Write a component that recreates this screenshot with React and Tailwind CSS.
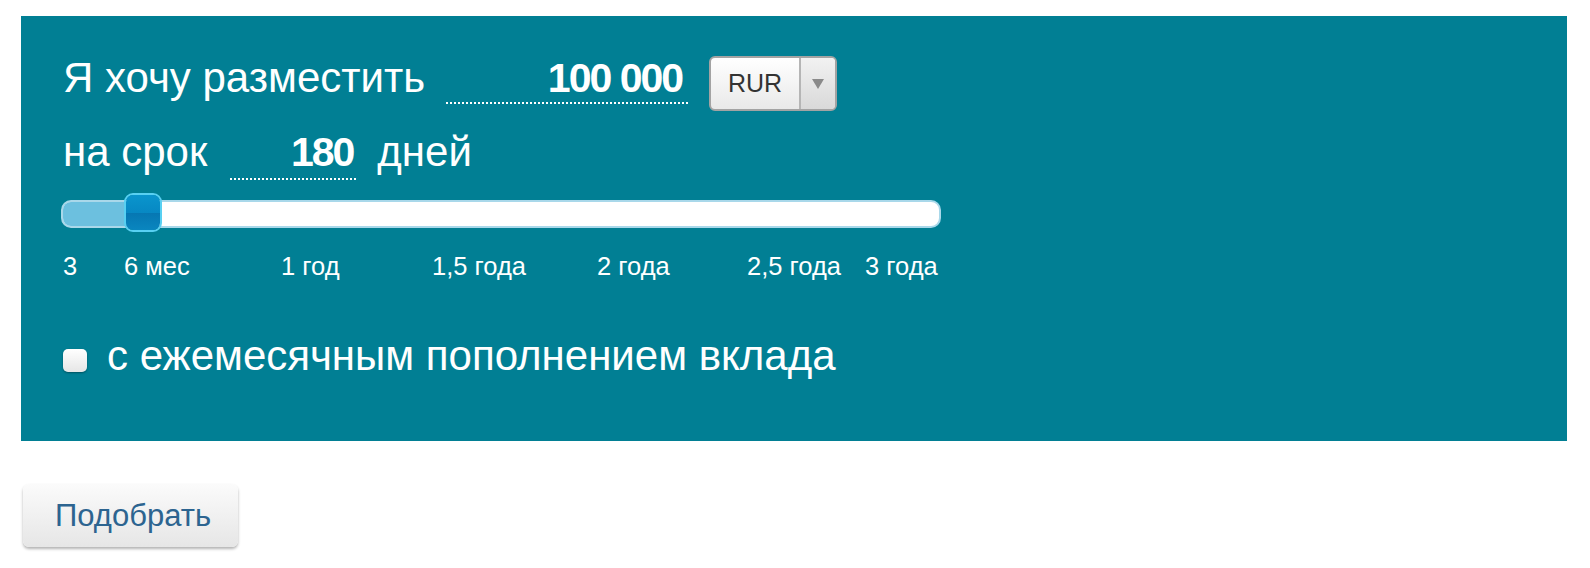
import { useState } from "react"

const ticks = [
  { label: "3", w: "w-[61px]" },
  { label: "6 мес", w: "w-[157px]" },
  { label: "1 год", w: "w-[151px]" },
  { label: "1,5 года", w: "w-[165px]" },
  { label: "2 года", w: "w-[150px]" },
  { label: "2,5 года", w: "w-[118px]" },
  { label: "3 года", w: "" },
]

export default function App() {
  const [refill, setRefill] = useState(false)

  return (
    <div className="min-h-[568px] w-[1590px] bg-white pt-[16px] font-['Liberation_Sans',Arial,sans-serif] text-white">
      {/* Deposit form panel */}
      <div className="ml-[21px] h-[425px] w-[1546px] bg-[#017f94] pl-[42px] pt-[40px]">
        <div className="flex h-[55px] items-start">
          <span className="mt-[1px] text-[42px] leading-[42px]">Я хочу разместить</span>
          <div className="ml-[21px] mt-[1px] w-[242px] border-b-2 border-dotted border-white pb-[3px] pr-[6px] text-right text-[41px] font-bold leading-[42px] tracking-[-2px]">
            100 000
          </div>
          <div className="ml-[21px] flex h-[55px] w-[128px] overflow-hidden rounded-[6px] border-2 border-[#a3a3a3] bg-gradient-to-b from-white to-[#e9e9e9] text-[#333]">
            <div className="flex flex-1 items-center justify-center text-[25px] leading-none">RUR</div>
            <div className="flex w-[36px] items-center justify-center border-l-2 border-[#b5b5b5] bg-gradient-to-b from-[#f2f2f2] to-[#d9d9d9]">
              <span className="h-0 w-0 border-x-[6px] border-t-[10px] border-x-transparent border-t-[#8a8a8a]" />
            </div>
          </div>
        </div>

        <div className="mt-[20px] flex items-start">
          <span className="text-[42px] leading-[42px]">на срок</span>
          <div className="ml-[23px] w-[126px] border-b-2 border-dotted border-white pb-[5px] pr-[3px] text-right text-[41px] font-bold leading-[42px] tracking-[-2px]">
            180
          </div>
          <span className="ml-[21px] text-[42px] leading-[42px]">дней</span>
        </div>

        {/* Term slider */}
        <div className="relative -ml-[2px] mt-[20px] h-[28px] w-[880px]">
          <div className="flex h-[28px] w-[880px] overflow-hidden rounded-[10px] border-2 border-[#a9d8ea] bg-white">
            <div className="h-full w-[72px] bg-[#6cc0df]" />
          </div>
          <div className="absolute left-[63px] top-[-7px] flex h-[39px] w-[38px] flex-col overflow-hidden rounded-[9px] border-2 border-[#58d0f2]">
            <div className="h-1/2 bg-gradient-to-b from-[#0a95cd] to-[#0788c3]" />
            <div className="h-1/2 bg-gradient-to-b from-[#0677b2] to-[#0a86bf]" />
          </div>
        </div>

        <div className="mt-[26px] flex text-[25.5px] leading-[25px]">
          {ticks.map((t) => (
            <span key={t.label} className={`${t.w} shrink-0 whitespace-nowrap`}>
              {t.label}
            </span>
          ))}
        </div>

        <label className="mt-[56px] flex cursor-pointer items-start">
          <span
            onClick={() => setRefill(!refill)}
            className="mt-[14px] flex h-[23px] w-[24px] items-center justify-center rounded-[5px] bg-gradient-to-b from-white to-[#e6e6e6] shadow-[0_1px_2px_rgba(0,0,0,0.35)]"
          >
            {refill && <span className="text-[16px] leading-none text-[#017f94]">✓</span>}
          </span>
          <span className="ml-[20px] text-[42px] leading-[42px]">с ежемесячным пополнением вклада</span>
        </label>
      </div>

      <button className="ml-[23px] mt-[43px] flex h-[63px] w-[215px] items-start rounded-[6px] bg-gradient-to-b from-[#fbfbfb] to-[#e6e6e6] pl-[32px] pt-[16px] text-[31px] leading-[31px] text-[#2c6490] shadow-[0_2px_3px_rgba(0,0,0,0.3)]">
        Подобрать
      </button>
    </div>
  )
}
